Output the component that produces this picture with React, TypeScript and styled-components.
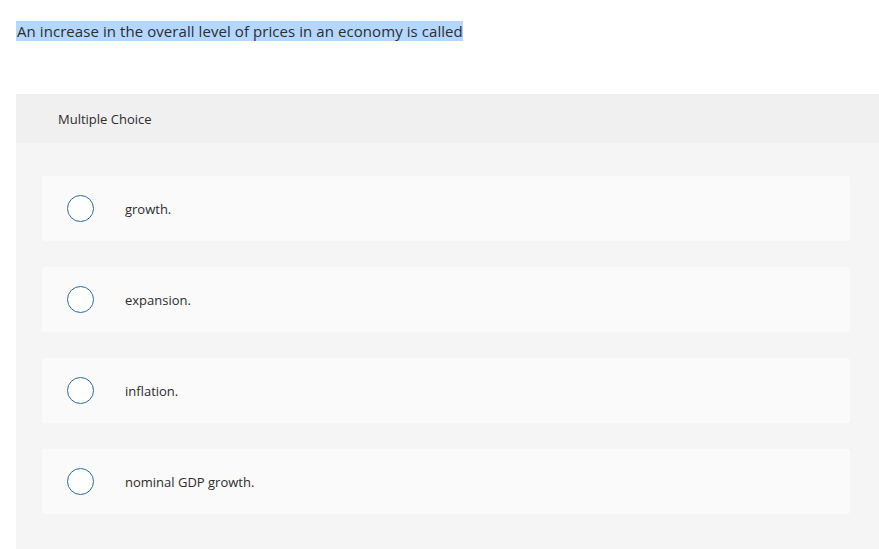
import React from 'react';
import styled, { createGlobalStyle } from 'styled-components';

const GlobalStyle = createGlobalStyle`
  html, body {
    margin: 0;
    padding: 0;
    background: #ffffff;
  }
  body {
    font-family: "Open Sans", Arial, sans-serif;
    color: #2d2d2d;
  }
`;

const options = ['growth.', 'expansion.', 'inflation.', 'nominal GDP growth.'];

const App: React.FC = () => {
  return (
    <>
      <GlobalStyle />
      <Page>
        <Question>
          <Highlight>An increase in the overall level of prices in an economy is called</Highlight>
        </Question>
        <Panel>
          <PanelHeader>Multiple Choice</PanelHeader>
          <OptionList>
            {options.map((opt) => (
              <OptionCard key={opt}>
                <Radio />
                <OptionText>{opt}</OptionText>
              </OptionCard>
            ))}
          </OptionList>
        </Panel>
      </Page>
    </>
  );
};

export default App;

const Page = styled.div`
  padding: 22px 0 0 16px;
`;

const Question = styled.p`
  margin: 0;
  font-size: 15px;
  letter-spacing: 0.07px;
  line-height: 19px;
  height: 19px;
`;

const Highlight = styled.span`
  background: #b3d7fe;
  padding: 0 0 0 1px;
`;

const Panel = styled.section`
  margin-top: 53px;
  background: #f5f5f5;
  min-height: 460px;
`;

const PanelHeader = styled.div`
  height: 49px;
  background: #f0f0f0;
  padding-left: 42px;
  display: flex;
  align-items: center;
  font-size: 13px;
  color: #2d2d2d;
`;

const OptionList = styled.div`
  display: flex;
  flex-direction: column;
  gap: 26px;
  padding: 33px 29px 0 26px;
`;

const OptionCard = styled.div`
  height: 65px;
  background: #fafafa;
  border-radius: 3px;
  display: flex;
  align-items: center;
  padding-left: 25px;
`;

const Radio = styled.span`
  width: 25px;
  height: 25px;
  border: 1.5px solid #2a6aa6;
  border-radius: 50%;
  background: #ffffff;
  flex-shrink: 0;
`;

const OptionText = styled.span`
  margin-left: 31px;
  font-size: 13px;
  color: #2d2d2d;
`;
